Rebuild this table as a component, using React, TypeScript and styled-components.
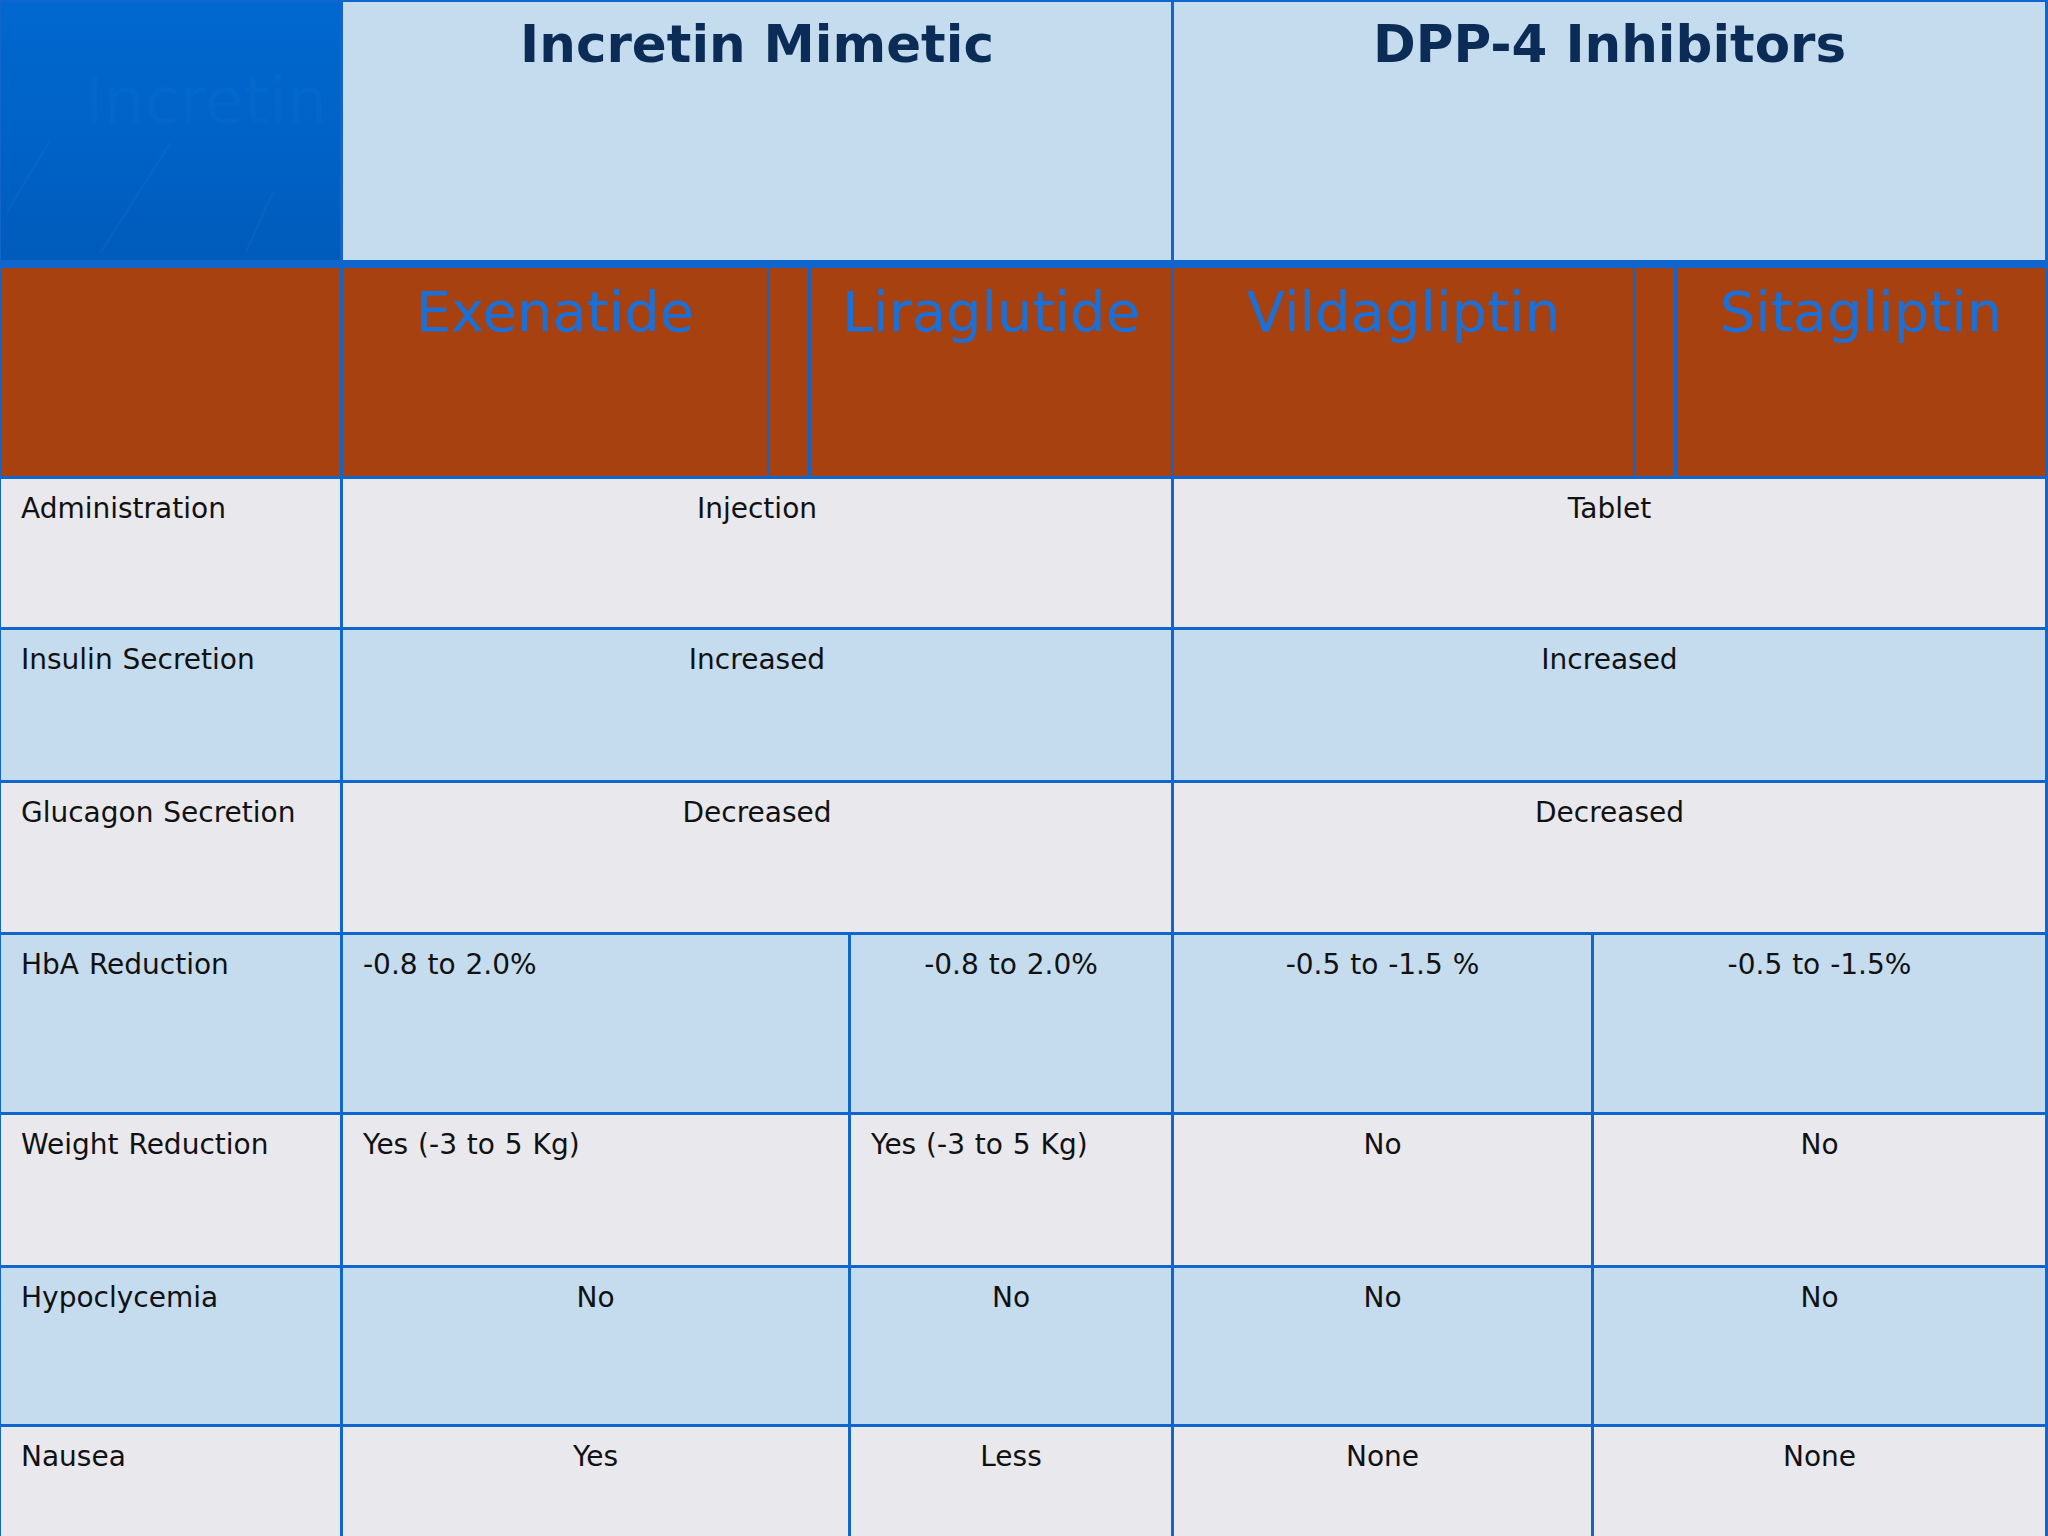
import React from "react";
import styled, { createGlobalStyle } from "styled-components";

const Global = createGlobalStyle`
  html, body {
    margin: 0;
    padding: 0;
    background: #e9e8ed;
    overflow: hidden;
  }
  body {
    font-family: "DejaVu Sans", Verdana, sans-serif;
  }
`;

const LINE = "#1066cc";
const GRAY = "#e9e8ed";
const LIGHT = "#c5dcee";

const Table = styled.div`
  width: 2048px;
  height: 1536px;
  box-sizing: border-box;
  overflow: hidden;
  background: ${LINE};
  padding: 2px 3px 0 1px;
  display: flex;
  flex-direction: column;
  gap: 3px;
`;

const Row = styled.div<{ $cols: string; $h: number; $after?: number }>`
  display: grid;
  grid-template-columns: ${(p) => p.$cols};
  column-gap: 3px;
  height: ${(p) => p.$h}px;
  flex-shrink: 0;
  margin-bottom: ${(p) => p.$after ?? 0}px;
`;

const Corner = styled.div`
  position: relative;
  overflow: hidden;
  background: linear-gradient(180deg, #0068d0 0%, #0062c6 55%, #005bbb 100%);
  padding: 62px 0 0 84px;
  white-space: nowrap;
  font-size: 64px;
  color: rgba(255, 255, 255, 0.02);
`;

const CornerLines = styled.svg`
  position: absolute;
  inset: 0;
  width: 100%;
  height: 100%;
`;

const GroupHead = styled.div`
  background: ${LIGHT};
  color: #0b2c56;
  font-weight: bold;
  font-size: 51.5px;
  text-align: center;
  padding-top: 12px;
`;

const DrugHead = styled.div`
  background: #a74210;
  color: #1a70d6;
  font-size: 56px;
  text-align: center;
  padding-top: 11px;
  white-space: nowrap;
`;

const Cell = styled.div<{ $tone: "gray" | "light"; $align: "left" | "center"; $span: number }>`
  grid-column: span ${(p) => p.$span};
  background: ${(p) => (p.$tone === "gray" ? GRAY : LIGHT)};
  color: #111;
  font-size: 28px;
  word-spacing: 1px;
  text-align: ${(p) => p.$align};
  padding: 13px 20px 0;
  white-space: nowrap;
`;

const HEAD_COLS = "339px 828px 1fr";
const DRUG_COLS = "339px 424px 38px 360px 459px 38px 1fr";
const BODY_COLS = "339px 505px 320px 417px 1fr";

type C = { t: string; span?: number; align?: "left" | "center" };
type R = { label: string; h: number; tone: "gray" | "light"; cells: C[] };

const rows: R[] = [
  { label: "Administration", h: 148, tone: "gray", cells: [{ t: "Injection", span: 2 }, { t: "Tablet", span: 2 }] },
  { label: "Insulin Secretion", h: 150, tone: "light", cells: [{ t: "Increased", span: 2 }, { t: "Increased", span: 2 }] },
  { label: "Glucagon Secretion", h: 149, tone: "gray", cells: [{ t: "Decreased", span: 2 }, { t: "Decreased", span: 2 }] },
  {
    label: "HbA Reduction",
    h: 177,
    tone: "light",
    cells: [{ t: "-0.8 to 2.0%", align: "left" }, { t: "-0.8 to 2.0%" }, { t: "-0.5 to -1.5 %" }, { t: "-0.5 to -1.5%" }],
  },
  {
    label: "Weight Reduction",
    h: 150,
    tone: "gray",
    cells: [{ t: "Yes (-3 to 5 Kg)", align: "left" }, { t: "Yes (-3 to 5 Kg)", align: "left" }, { t: "No" }, { t: "No" }],
  },
  { label: "Hypoclycemia", h: 156, tone: "light", cells: [{ t: "No" }, { t: "No" }, { t: "No" }, { t: "No" }] },
  { label: "Nausea", h: 140, tone: "gray", cells: [{ t: "Yes" }, { t: "Less" }, { t: "None" }, { t: "None" }] },
];

export default function App() {
  return (
    <>
      <Global />
      <Table>
        <Row $cols={HEAD_COLS} $h={258} $after={5}>
          <Corner>
            <CornerLines viewBox="0 0 339 258" preserveAspectRatio="none">
              <g stroke="rgba(255,255,255,0.03)" strokeWidth="2" fill="none">
                <line x1="6" y1="210" x2="48" y2="140" />
                <line x1="100" y1="250" x2="170" y2="140" />
                <line x1="245" y1="250" x2="272" y2="190" />
              </g>
            </CornerLines>
            Incretin
          </Corner>
          <GroupHead>Incretin Mimetic</GroupHead>
          <GroupHead>DPP-4 Inhibitors</GroupHead>
        </Row>
        <Row $cols={DRUG_COLS} $h={208}>
          <DrugHead />
          <DrugHead>Exenatide</DrugHead>
          <DrugHead />
          <DrugHead>Liraglutide</DrugHead>
          <DrugHead>Vildagliptin</DrugHead>
          <DrugHead />
          <DrugHead>Sitagliptin</DrugHead>
        </Row>
        {rows.map((r) => (
          <Row key={r.label} $cols={BODY_COLS} $h={r.h}>
            <Cell $tone={r.tone} $align="left" $span={1}>
              {r.label}
            </Cell>
            {r.cells.map((c, i) => (
              <Cell key={i} $tone={r.tone} $align={c.align ?? "center"} $span={c.span ?? 1}>
                {c.t}
              </Cell>
            ))}
          </Row>
        ))}
      </Table>
    </>
  );
}
